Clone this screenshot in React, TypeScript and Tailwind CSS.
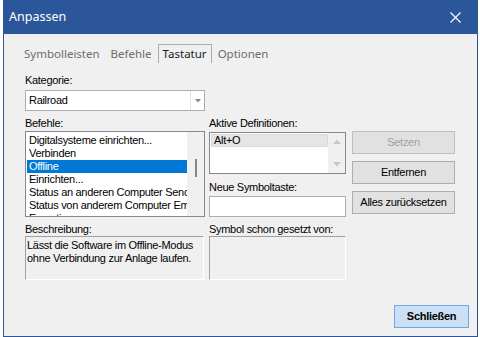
const BEFEHLE = [
  'Digitalsysteme einrichten...',
  'Verbinden',
  'Offline',
  'Einrichten...',
  'Status an anderen Computer Senden',
  'Status von anderem Computer Empfangen',
  'Exportieren...',
];

const TABS = ['Symbolleisten', 'Befehle', 'Tastatur', 'Optionen'];

function Button({ label, disabled }: { label: string; disabled?: boolean }) {
  return (
    <div
      className={
        'h-[23px] flex items-center justify-center border ' +
        (disabled
          ? 'border-[#bfbfbf] bg-[#e1e1e1] text-[#a0a0a0]'
          : 'border-[#adadad] bg-[#e1e1e1] text-black')
      }
    >
      {label}
    </div>
  );
}

export default function App() {
  return (
    <div className="w-[480px] h-[337px] bg-white overflow-hidden font-['Liberation_Sans',Arial,sans-serif] text-[11px] leading-[13px] tracking-[-0.3px] text-black">
      <div className="ml-[3px] w-[475px] h-[337px] flex flex-col border-x border-b border-[#2b579a] bg-[#f0f0f0]">
        {/* Title bar */}
        <div className="h-[34px] shrink-0 bg-[#2b579a] flex items-center justify-between pl-[5px] pr-[16px] font-['Noto_Sans',sans-serif] text-[12.5px] tracking-normal text-white">
          <span className="-mt-[1px]">Anpassen</span>
          <svg width="11" height="11" viewBox="0 0 11 11">
            <path d="M0.5 0.5 L10.5 10.5 M10.5 0.5 L0.5 10.5" stroke="white" strokeWidth="1.1" />
          </svg>
        </div>

        <div className="flex-1 flex flex-col pl-[21px] pr-[8px]">
          {/* Tabs */}
          <div className="mt-[10px] h-[19px] flex items-end font-['Noto_Sans',sans-serif] text-[11.5px] leading-[18px] tracking-normal -ml-[6px]">
            {TABS.map((t) => (
              <div
                key={t}
                className={
                  'h-[19px] px-[4px] mr-[1px] border-x border-t ' +
                  (t === 'Tastatur'
                    ? 'border-[#adadad] text-[#1a1a1a]'
                    : 'border-transparent text-[#6d6d6d]')
                }
              >
                {t}
              </div>
            ))}
          </div>

          {/* Kategorie */}
          <div className="mt-[11px]">Kategorie:</div>
          <div className="mt-[3px] w-[180px] h-[21px] flex bg-white border border-[#abadb3]">
            <div className="flex-1 pl-[3px] flex items-center">Railroad</div>
            <div className="w-[14px] border-l border-[#e3e3e3] flex items-center justify-center">
              <svg width="6" height="4" viewBox="0 0 6 4">
                <path d="M0 0 H6 L3 3.5 Z" fill="#8a8a8a" />
              </svg>
            </div>
          </div>

          {/* Main columns */}
          <div className="mt-[6px] flex">
            <div className="w-[180px]">
              <div>Befehle:</div>
              <div className="mt-[1px] h-[86px] flex bg-white border border-[#828790] overflow-hidden">
                <div className="flex-1 pt-[2px] pl-[1px] overflow-hidden">
                  {BEFEHLE.map((b) => (
                    <div
                      key={b}
                      className={
                        'h-[13px] pl-[2px] whitespace-nowrap ' +
                        (b === 'Offline' ? 'bg-[#0078d7] text-white' : '')
                      }
                    >
                      {b}
                    </div>
                  ))}
                </div>
                <div className="w-[17px] bg-[#f0f0f0] flex justify-center pt-[27px]">
                  <div className="w-[2px] h-[18px] bg-[#858585]" />
                </div>
              </div>
            </div>

            <div className="ml-[4px] w-[137px]">
              <div>Aktive Definitionen:</div>
              <div className="mt-[2px] h-[42px] flex bg-white border border-[#828790]">
                <div className="flex-1 pt-[1px] pl-[1px]">
                  <div className="h-[13px] pl-[2px] bg-[#e5e5e5] border border-[#d9d9d9] leading-[11px]">Alt+O</div>
                </div>
                <div className="w-[17px] bg-[#f0f0f0] flex flex-col items-center justify-between py-[6px]">
                  <svg width="8" height="5" viewBox="0 0 8 5">
                    <path d="M0 5 L4 0.5 L8 5 Z" fill="#c8c8c8" />
                  </svg>
                  <svg width="8" height="5" viewBox="0 0 8 5">
                    <path d="M0 0 L4 4.5 L8 0 Z" fill="#c8c8c8" />
                  </svg>
                </div>
              </div>
              <div className="mt-[7px]">Neue Symboltaste:</div>
              <div className="mt-[2px] h-[21px] bg-white border border-[#abadb3]" />
            </div>

            <div className="ml-[6px] w-[103px] pt-[14px] flex flex-col gap-[7px]">
              <Button label="Setzen" disabled />
              <Button label="Entfernen" />
              <Button label="Alles zurücksetzen" />
            </div>
          </div>

          {/* Beschreibung row */}
          <div className="mt-[6px] flex">
            <div className="w-[179px]">
              <div>Beschreibung:</div>
              <div className="h-[44px] border-t border-l border-[#a0a0a0] border-r border-b border-r-white border-b-white pl-[1px] pt-[2px] whitespace-nowrap">
                <div>Lässt die Software im Offline-Modus</div>
                <div>ohne Verbindung zur Anlage laufen.</div>
              </div>
            </div>
            <div className="ml-[5px] w-[137px]">
              <div>Symbol schon gesetzt von:</div>
              <div className="h-[44px] border-t border-l border-[#a0a0a0] border-r border-b border-r-white border-b-white" />
            </div>
          </div>

          {/* Footer */}
          <div className="mt-[25px] flex justify-end">
            <div className="w-[75px] h-[23px] flex items-center justify-center border border-[#6fa7e6] bg-[#cce0f5] font-bold">
              Schließen
            </div>
          </div>
        </div>
      </div>
    </div>
  );
}
